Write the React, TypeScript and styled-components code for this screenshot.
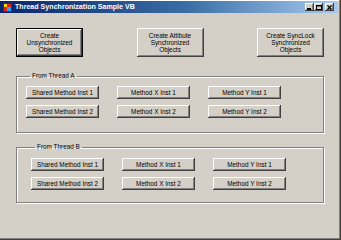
import React from "react";
import styled, { createGlobalStyle, css } from "styled-components";

const Global = createGlobalStyle`
  html, body { margin: 0; padding: 0; background: #D4D0C8; }
  body { width: 341px; height: 240px; overflow: hidden; }
  #root { width: 341px; height: 240px; }
`;

const Window = styled.div`
  box-sizing: border-box;
  width: 341px;
  height: 240px;
  background: #D4D0C8;
  padding: 1px 3px 3px 0;
  display: flex;
  flex-direction: column;
  font-family: "Liberation Sans", Arial, sans-serif;
  box-shadow: inset -1px -1px #404040, inset -2px -2px #808080, inset 0 1px #FFFFFF;
`;

const TitleBar = styled.div`
  height: 12px;
  display: flex;
  align-items: center;
  background: linear-gradient(to right, #0A246A 0%, #3A6EA5 55%, #A6CAF0 100%);
  padding: 0 4px 0 3px;
  gap: 3px;
`;

const TitleText = styled.span`
  flex: 1;
  color: #fff;
  font-weight: bold;
  font-size: 7.1px;
  line-height: 12px;
  white-space: nowrap;
`;

const Controls = styled.div`
  display: flex;
  align-items: center;
`;

const CtlButton = styled.div<{ $gapLeft?: boolean }>`
  width: 9px;
  height: 8px;
  background: #D4D0C8;
  box-shadow: inset -1px -1px #404040, inset 1px 1px #fff, inset -2px -2px #808080;
  display: flex;
  align-items: center;
  justify-content: center;
  margin-left: ${(p) => (p.$gapLeft ? "2px" : "0")};
  svg { display: block; }
`;

const Client = styled.div`
  display: flex;
  flex-direction: column;
  padding-left: 16px;
  width: 308px;
`;

const TopRow = styled.div`
  margin-top: 15px;
  display: flex;
  justify-content: space-between;
`;

const bevel = css`
  box-sizing: border-box;
  background: #D4D0C8;
  border: none;
  padding: 0;
  margin: 0;
  font-family: "Liberation Sans", Arial, sans-serif;
  color: #000;
  font-size: 6.4px;
  box-shadow: inset -1px -1px #404040, inset 1px 1px #fff, inset -2px -2px #808080;
`;

const BigButton = styled.button<{ $default?: boolean }>`
  ${bevel};
  width: 67px;
  height: 29px;
  line-height: 7.3px;
  text-align: center;
  ${(p) =>
    p.$default &&
    css`
      box-shadow: inset 0 0 0 1px #000, inset -2px -2px #404040, inset 2px 2px #fff, inset -3px -3px #808080;
    `}
`;

const Group = styled.fieldset<{ $top: number; $pt: number; $pb: number; $pl: number }>`
  margin: ${(p) => p.$top}px 0 0 0;
  padding: ${(p) => p.$pt}px 0 ${(p) => p.$pb}px ${(p) => p.$pl}px;
  border: 1px solid #808080;
  box-shadow: inset 1px 1px #fff, 1px 1px #fff;
  min-width: 0;
  width: 308px;
  box-sizing: border-box;
`;

const Legend = styled.legend`
  font-size: 6.4px;
  line-height: 8px;
  padding: 0 2px;
  margin-left: 4px;
  color: #000;
`;

const Grid = styled.div`
  display: grid;
  grid-template-columns: repeat(3, 73px);
  column-gap: 18px;
  row-gap: 6px;
`;

const SmallButton = styled.button`
  ${bevel};
  height: 13px;
  width: 73px;
  line-height: 13px;
  white-space: nowrap;
`;

const AppIcon = () => (
  <svg width="9" height="9" viewBox="0 0 9 9">
    <rect x="0" y="0" width="9" height="9" fill="#1030c0" />
    <rect x="1" y="1" width="3" height="3" fill="#ffd800" />
    <rect x="4" y="1" width="4" height="3" fill="#e02010" />
    <rect x="1" y="4" width="3" height="4" fill="#e02010" />
    <rect x="4" y="4" width="4" height="4" fill="#30a0ff" />
  </svg>
);

const rows = ["1", "2"];

const GroupContent = () => (
  <Grid>
    {rows.map((n) => (
      <React.Fragment key={n}>
        <SmallButton>Shared Method Inst {n}</SmallButton>
        <SmallButton>Method X Inst {n}</SmallButton>
        <SmallButton>Method Y Inst {n}</SmallButton>
      </React.Fragment>
    ))}
  </Grid>
);

export default function App() {
  return (
    <>
      <Global />
      <Window>
        <TitleBar>
          <AppIcon />
          <TitleText>Thread Synchronization Sample VB</TitleText>
          <Controls>
            <CtlButton>
              <svg width="5" height="5" viewBox="0 0 5 5">
                <rect x="0" y="3" width="4" height="2" fill="#000" />
              </svg>
            </CtlButton>
            <CtlButton>
              <svg width="6" height="5" viewBox="0 0 6 5">
                <rect x="0.5" y="0.5" width="5" height="4" fill="none" stroke="#000" />
                <rect x="0" y="0" width="6" height="1.5" fill="#000" />
              </svg>
            </CtlButton>
            <CtlButton $gapLeft>
              <svg width="5" height="5" viewBox="0 0 5 5">
                <path d="M0.5 0.5 L4.5 4.5 M4.5 0.5 L0.5 4.5" stroke="#000" strokeWidth="1.2" />
              </svg>
            </CtlButton>
          </Controls>
        </TitleBar>
        <Client>
          <TopRow>
            <BigButton $default>
              Create
              <br />
              Unsynchronized
              <br />
              Objects
            </BigButton>
            <BigButton>
              Create Attibute
              <br />
              Synchronized
              <br />
              Objects
            </BigButton>
            <BigButton>
              Create SyncLock
              <br />
              Synchronized
              <br />
              Objects
            </BigButton>
          </TopRow>
          <Group $top={15} $pt={6} $pb={14} $pl={9}>
            <Legend>From Thread A</Legend>
            <GroupContent />
          </Group>
          <Group $top={10} $pt={7} $pb={12} $pl={14}>
            <Legend>From Thread B</Legend>
            <GroupContent />
          </Group>
        </Client>
      </Window>
    </>
  );
}
